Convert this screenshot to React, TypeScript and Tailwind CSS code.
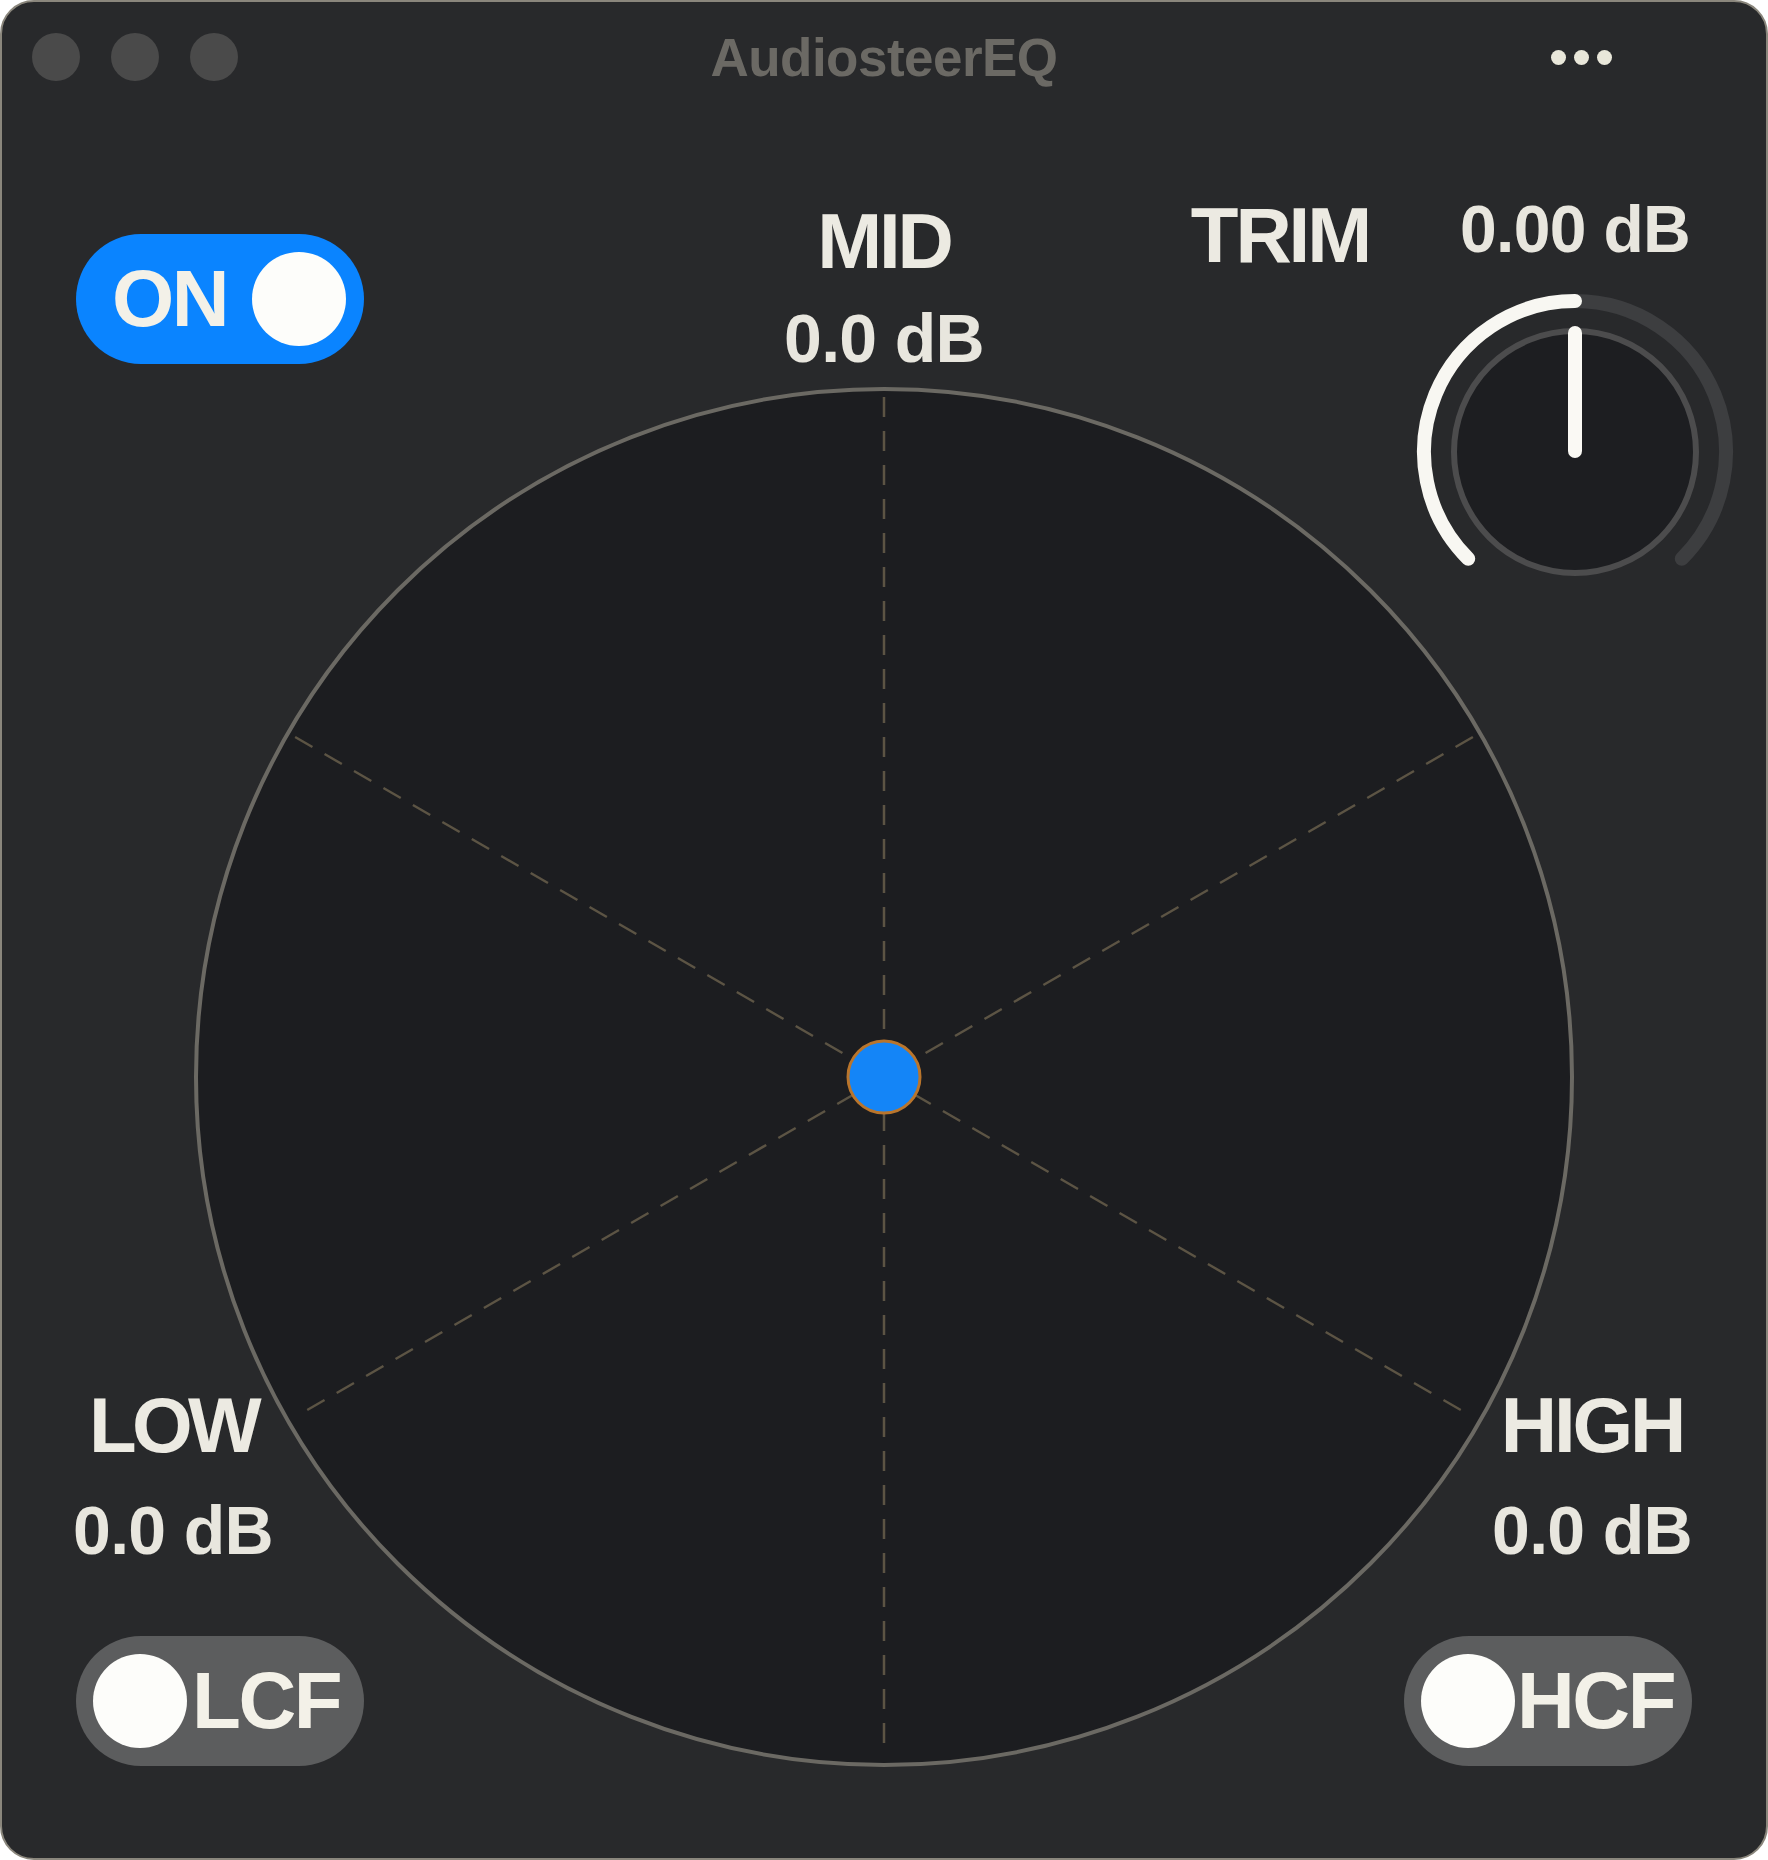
import React from "react";

const font = { fontFamily: '"Liberation Sans", Arial, sans-serif' };

function Toggle({ label, on, knobLeft, gap }: { label: string; on?: boolean; knobLeft?: boolean; gap: string }) {
  const knob = <div className="h-[94px] w-[94px] shrink-0 rounded-full bg-[#fdfdfa]" />;
  return (
    <div
      className={`flex h-[130px] w-[288px] items-center rounded-full ${on ? "bg-[#0a84ff] pl-[36px] pr-[18px] justify-between" : "bg-[#5c5d5e] pl-[17px]"}`}
    >
      {knobLeft && knob}
      <span className={`text-[80px] font-bold leading-none tracking-[-0.03em] text-[#f3f1e8] ${gap}`}>{label}</span>
      {!knobLeft && knob}
    </div>
  );
}

function Band({ name, value, wide }: { name: string; value: string; wide?: boolean }) {
  return (
    <div className="flex flex-col items-center">
      <span className={`text-[78px] font-bold leading-none text-[#eceae2] ${wide ? "tracking-[-0.06em]" : "tracking-[-0.04em]"}`}>{name}</span>
      <span className="mt-[32px] text-[68px] font-bold leading-none tracking-[-0.01em] text-[#e8e6de]">{value}</span>
    </div>
  );
}

function Knob() {
  const c = 160;
  const r = 151;
  const pt = (deg: number) => {
    const a = (deg * Math.PI) / 180;
    return `${c + r * Math.sin(a)} ${c - r * Math.cos(a)}`;
  };
  return (
    <svg width="320" height="320" viewBox="0 0 320 320">
      <path d={`M ${pt(0)} A ${r} ${r} 0 0 1 ${pt(135)}`} fill="none" stroke="#3d3e40" strokeWidth="14" strokeLinecap="round" />
      <path d={`M ${pt(-135)} A ${r} ${r} 0 0 1 ${pt(0)}`} fill="none" stroke="#f8f7f2" strokeWidth="14" strokeLinecap="round" />
      <circle cx={c} cy={c} r="121" fill="#1d1e21" stroke="#4c4c4d" strokeWidth="6" />
      <line x1={c} y1="41" x2={c} y2="159" stroke="#faf9f4" strokeWidth="14" strokeLinecap="round" />
    </svg>
  );
}

function Pad() {
  const c = 692;
  const l = 680;
  const dx = l * Math.cos(Math.PI / 6);
  const dy = l * Math.sin(Math.PI / 6);
  const dash = { stroke: "#5c5444", strokeWidth: 2.5, strokeDasharray: "20 14" };
  return (
    <svg width="1384" height="1384" viewBox="0 0 1384 1384">
      <circle cx={c} cy={c} r="688" fill="#1c1d20" stroke="#6b6963" strokeWidth="4" />
      <line x1={c} y1={c - l} x2={c} y2={c + l} {...dash} />
      <line x1={c - dx} y1={c - dy} x2={c + dx} y2={c + dy} {...dash} />
      <line x1={c + dx} y1={c - dy} x2={c - dx} y2={c + dy} {...dash} />
      <circle cx={c} cy={c} r="36" fill="#1485f7" stroke="#b9752c" strokeWidth="3" />
    </svg>
  );
}

export default function App() {
  return (
    <div className="bg-white" style={font}>
      <div className="grid h-[1860px] w-[1768px] overflow-hidden rounded-[34px] border-2 border-[#8a867c] bg-[#28292b]">
        {/* title bar */}
        <div className="col-start-1 row-start-1 grid h-[110px] grid-cols-[1fr_auto_1fr] items-center self-start px-[30px]">
          <div className="flex gap-[31px]">
            <div className="h-[48px] w-[48px] rounded-full bg-[#4a4a4a]" />
            <div className="h-[48px] w-[48px] rounded-full bg-[#4a4a4a]" />
            <div className="h-[48px] w-[48px] rounded-full bg-[#4a4a4a]" />
          </div>
          <span className="text-[53px] font-bold leading-none tracking-[-0.01em] text-[#6b6964]">AudiosteerEQ</span>
          <div className="flex justify-end gap-[8px] pr-[124px]">
            <div className="h-[15px] w-[15px] rounded-full bg-[#e9e7da]" />
            <div className="h-[15px] w-[15px] rounded-full bg-[#e9e7da]" />
            <div className="h-[15px] w-[15px] rounded-full bg-[#e9e7da]" />
          </div>
        </div>

        {/* xy pad */}
        <div className="col-start-1 row-start-1 mt-[383px] self-start justify-self-center">
          <Pad />
        </div>

        {/* power */}
        <div className="col-start-1 row-start-1 ml-[74px] mt-[232px] self-start justify-self-start">
          <Toggle label="ON" on gap="" />
        </div>

        {/* mid */}
        <div className="col-start-1 row-start-1 mt-[200px] flex flex-col items-center self-start justify-self-center">
          <span className="text-[78px] font-bold leading-none tracking-[-0.04em] text-[#eceae2]">MID</span>
          <span className="mt-[24px] text-[68px] font-bold leading-none tracking-[-0.01em] text-[#e8e6de]">0.0 dB</span>
        </div>

        {/* trim */}
        <div className="col-start-1 row-start-1 mr-[31px] mt-[194px] flex items-start gap-[46px] self-start justify-self-end">
          <span className="text-[78px] font-bold leading-none tracking-[-0.04em] text-[#eceae2]">TRIM</span>
          <div className="flex w-[320px] flex-col items-center">
            <span className="text-[66px] font-bold leading-none tracking-[-0.01em] text-[#e8e6de]">0.00 dB</span>
            <div className="mt-[30px]">
              <Knob />
            </div>
          </div>
        </div>

        {/* low */}
        <div className="col-start-1 row-start-1 mb-[92px] ml-[71px] flex flex-col items-start gap-[72px] self-end justify-self-start">
          <Band name="LOW" value="0.0 dB" wide />
          <div className="ml-[3px]">
            <Toggle label="LCF" knobLeft gap="ml-[5px]" />
          </div>
        </div>

        {/* high */}
        <div className="col-start-1 row-start-1 mb-[92px] mr-[74px] flex flex-col items-end gap-[72px] self-end justify-self-end">
          <Band name="HIGH" value="0.0 dB" />
          <Toggle label="HCF" knobLeft gap="ml-[2px]" />
        </div>
      </div>
    </div>
  );
}
